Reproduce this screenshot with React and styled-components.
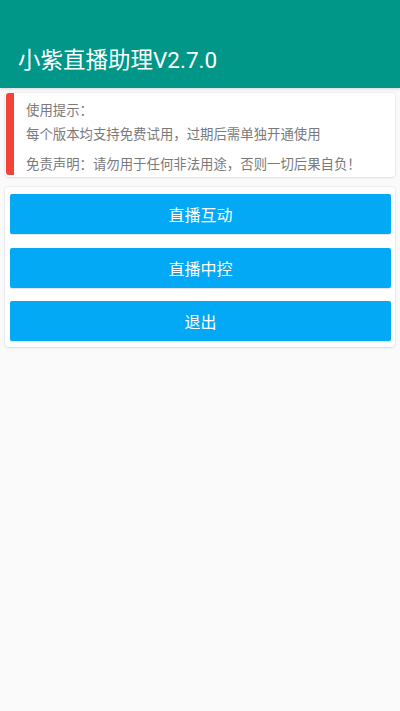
import React from "react";
import styled, { createGlobalStyle } from "styled-components";

const Global = createGlobalStyle`
  html, body { margin: 0; padding: 0; background: #fafafa; }
  body { font-family: Roboto, "Noto Sans CJK SC", sans-serif; }
  * { box-sizing: border-box; }
`;

const Page = styled.div`
  width: 400px;
  min-height: 711px;
  background: #fafafa;
  display: flex;
  flex-direction: column;
`;

const Header = styled.header`
  height: 88px;
  background: #009688;
  display: flex;
  align-items: flex-end;
  padding: 0 0 13px 18px;
  box-shadow: 0 1px 3px rgba(0, 0, 0, 0.15);
`;

const Title = styled.h1`
  margin: 0;
  font-size: 22.5px;
  font-weight: 400;
  color: #ffffff;
  line-height: 30px;
  font-family: Roboto, "Noto Sans CJK SC", sans-serif;
`;

const Content = styled.main`
  padding: 5px 5px 0 5px;
  display: flex;
  flex-direction: column;
  gap: 10px;
`;

const Card = styled.section`
  background: #ffffff;
  border-radius: 3px;
  box-shadow: 0 0 2px rgba(0, 0, 0, 0.14), 0 1px 2px rgba(0, 0, 0, 0.08);
`;

const NoticeCard = styled(Card)`
  display: flex;
  height: 84px;
`;

const Bar = styled.div`
  width: 8px;
  margin: 0 0 2px 1px;
  background: #f44336;
  border-radius: 3px 0 0 3px;
`;

const NoticeBody = styled.div`
  padding: 4px 0 0 12px;
  display: flex;
  flex-direction: column;
`;

const Line = styled.p`
  margin: ${(p) => (p.$gap ? "6px" : "0")} 0 0 0;
  font-size: 13.4px;
  line-height: 24px;
  color: #7a7a7a;
  white-space: nowrap;
  font-family: "Noto Sans CJK SC", sans-serif;
`;

const ButtonCard = styled(Card)`
  display: flex;
  flex-direction: column;
  padding: 7px 4px 6px 5px;
  gap: 13.5px;
`;

const Button = styled.button`
  height: 40px;
  border: none;
  border-radius: 2px;
  background: #03a9f4;
  color: #ffffff;
  font-size: 16px;
  font-family: "Noto Sans CJK SC", sans-serif;
  box-shadow: 0 1px 1px rgba(0, 0, 0, 0.12);
  cursor: pointer;
  padding: 0;
`;

export default function App() {
  return (
    <Page>
      <Global />
      <Header>
        <Title>小紫直播助理V2.7.0</Title>
      </Header>
      <Content>
        <NoticeCard>
          <Bar />
          <NoticeBody>
            <Line>使用提示：</Line>
            <Line>每个版本均支持免费试用，过期后需单独开通使用</Line>
            <Line $gap>免责声明：请勿用于任何非法用途，否则一切后果自负！</Line>
          </NoticeBody>
        </NoticeCard>
        <ButtonCard>
          <Button>直播互动</Button>
          <Button>直播中控</Button>
          <Button>退出</Button>
        </ButtonCard>
      </Content>
    </Page>
  );
}
